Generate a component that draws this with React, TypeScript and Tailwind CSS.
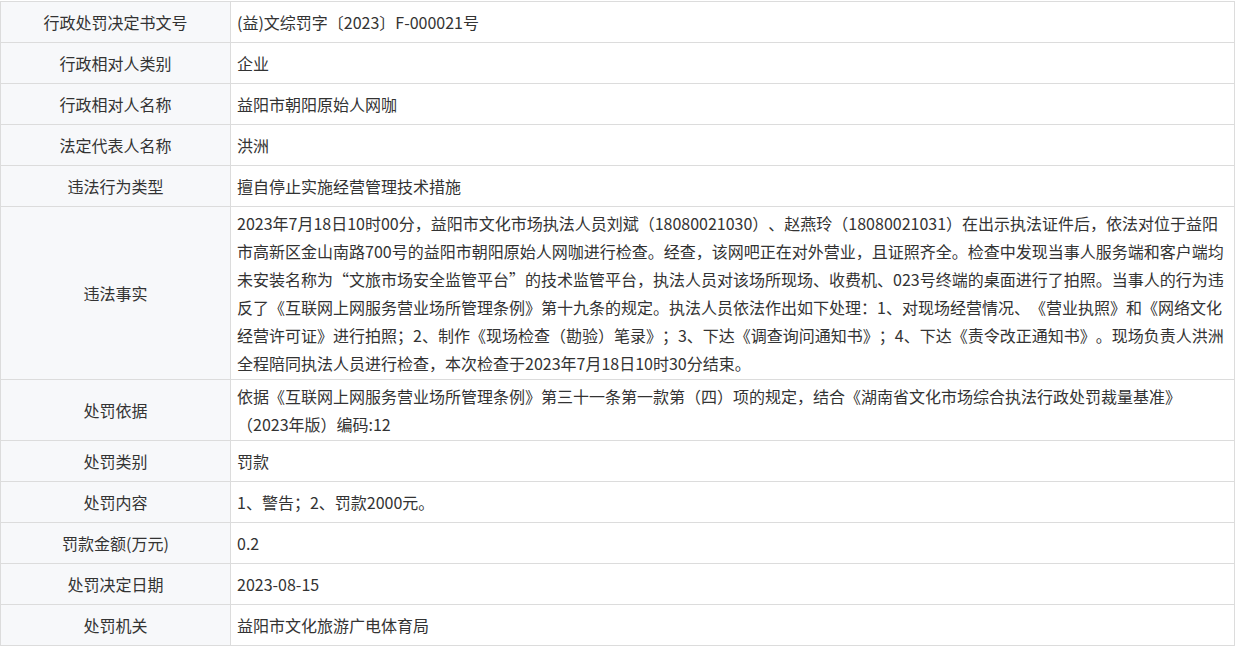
const rows: { label: string; value: string | string[] }[] = [
  { label: "行政处罚决定书文号", value: "(益)文综罚字〔2023〕F-000021号" },
  { label: "行政相对人类别", value: "企业" },
  { label: "行政相对人名称", value: "益阳市朝阳原始人网咖" },
  { label: "法定代表人名称", value: "洪洲" },
  { label: "违法行为类型", value: "擅自停止实施经营管理技术措施" },
  {
    label: "违法事实",
    value: [
      "2023年7月18日10时00分，益阳市文化市场执法人员刘斌（18080021030）、赵燕玲（18080021031）在出示执法证件后，依法对位于益阳",
      "市高新区金山南路700号的益阳市朝阳原始人网咖进行检查。经查，该网吧正在对外营业，且证照齐全。检查中发现当事人服务端和客户端均",
      "未安装名称为“文旅市场安全监管平台”的技术监管平台，执法人员对该场所现场、收费机、023号终端的桌面进行了拍照。当事人的行为违",
      "反了《互联网上网服务营业场所管理条例》第十九条的规定。执法人员依法作出如下处理：1、对现场经营情况、《营业执照》和《网络文化",
      "经营许可证》进行拍照；2、制作《现场检查（勘验）笔录》；3、下达《调查询问通知书》；4、下达《责令改正通知书》。现场负责人洪洲",
      "全程陪同执法人员进行检查，本次检查于2023年7月18日10时30分结束。",
    ],
  },
  {
    label: "处罚依据",
    value: [
      "依据《互联网上网服务营业场所管理条例》第三十一条第一款第（四）项的规定，结合《湖南省文化市场综合执法行政处罚裁量基准》",
      "（2023年版）编码:12",
    ],
  },
  { label: "处罚类别", value: "罚款" },
  { label: "处罚内容", value: "1、警告；2、罚款2000元。" },
  { label: "罚款金额(万元)", value: "0.2" },
  { label: "处罚决定日期", value: "2023-08-15" },
  { label: "处罚机关", value: "益阳市文化旅游广电体育局" },
];

export default function App() {
  return (
    <div className="w-[1237px] h-[648px] bg-white pt-px font-['Noto_Sans_CJK_SC','Noto_Sans',sans-serif] text-[16px] text-[#333] [text-spacing-trim:space-all]">
      <table className="w-[1235px] table-fixed border-collapse">
        <tbody>
          {rows.map((row) => (
            <tr key={row.label}>
              <td className="w-[230px] h-[41px] border border-[#dcdcdc] bg-[#f7f8fa] text-center align-middle leading-[28px]">
                {row.label}
              </td>
              <td className="h-[41px] border border-[#dcdcdc] bg-white px-[6px] py-[2px] align-middle leading-[28px]">
                {Array.isArray(row.value)
                  ? row.value.map((line, i) => (
                      <div key={i} className="whitespace-nowrap">
                        {line}
                      </div>
                    ))
                  : row.value}
              </td>
            </tr>
          ))}
        </tbody>
      </table>
    </div>
  );
}
